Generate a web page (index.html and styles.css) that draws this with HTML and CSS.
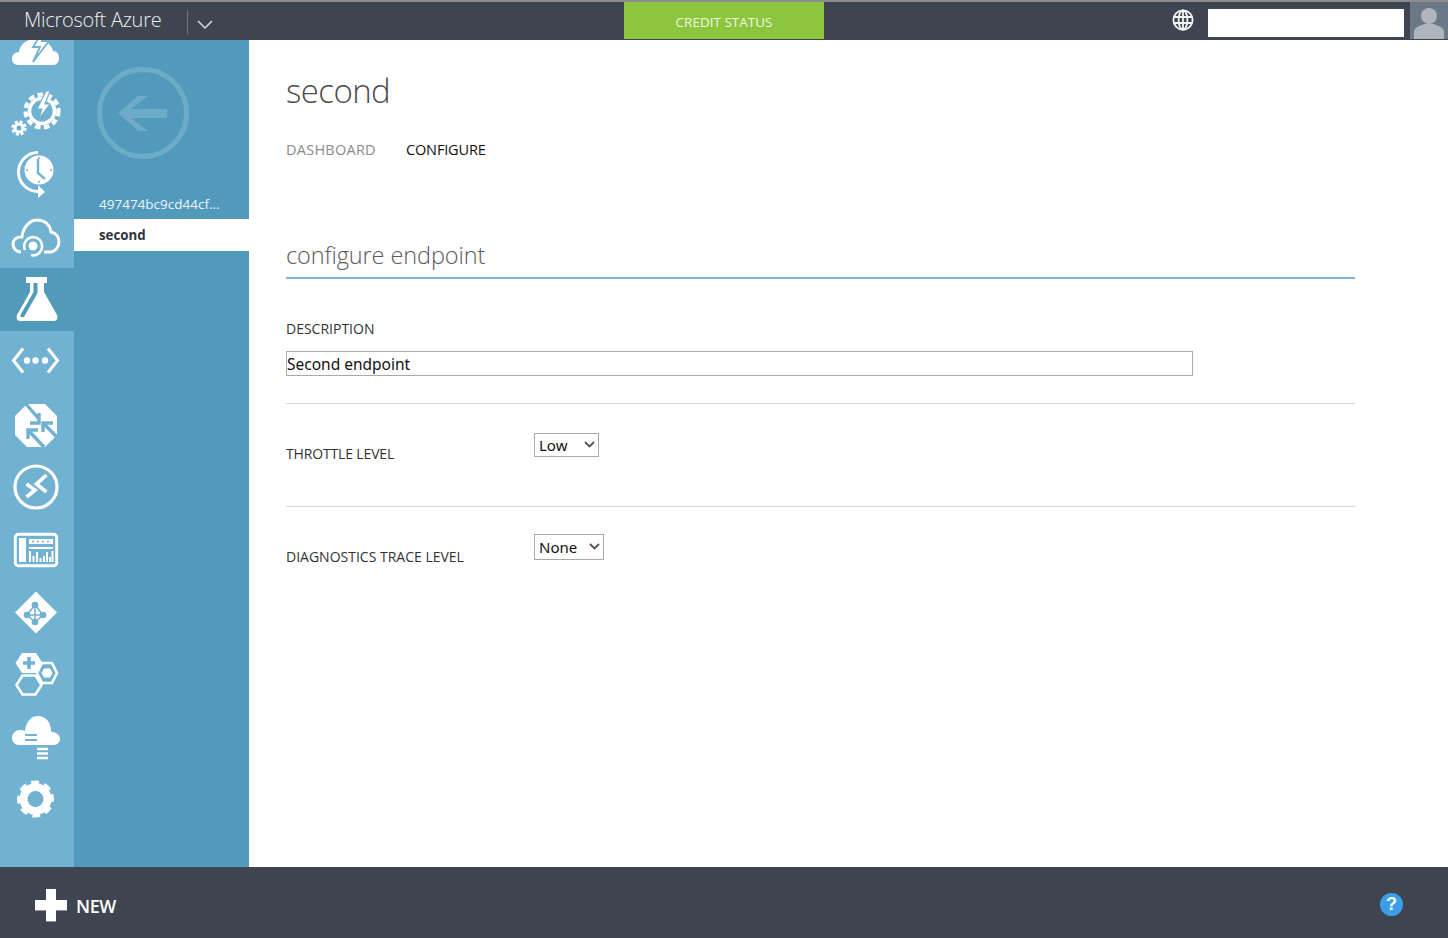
FILE: index.html
```html
<!DOCTYPE html>
<html lang="en">
<head>
<meta charset="utf-8">
<title>Microsoft Azure</title>
<link rel="stylesheet" href="styles.css">
</head>
<body>
<div class="app">
  <header class="topbar">
    <div class="brand">Microsoft Azure</div>
    <div class="brand-menu">
      <svg width="18" height="12" viewBox="0 0 18 12"><path d="M2 3l7 7 7-7" fill="none" stroke="#d8dade" stroke-width="1.5"/></svg>
    </div>
    <div class="credit-wrap"><a class="credit">CREDIT STATUS</a></div>
    <div class="top-right">
      <svg class="globe" width="22" height="22" viewBox="0 0 22 22" fill="none" stroke="#f2f3f4" stroke-width="1.8"><circle cx="11" cy="11" r="9.6"/><ellipse cx="11" cy="11" rx="4.4" ry="9.6"/><path d="M11 2v18M2 8h18M2 14h18"/></svg>
      <input class="search" type="text" aria-label="Search">
      <div class="avatar">
        <svg width="38" height="37" viewBox="0 0 38 37"><circle cx="19" cy="14" r="8" fill="#aeb5bc"/><path d="M4 37v-7c0-5 6-6 10-8h10c4 2 10 3 10 8v7z" fill="#aeb5bc"/></svg>
      </div>
    </div>
  </header>

  <div class="main">
    <nav class="rail">
      <ul class="rail-list">
        <li class="rail-item"><svg viewBox="0 0 74 63"><path d="M18 49c-4 0-6-3-6-6 0-4 3-7 7-7 1-8 8-13 17-13s15 5 17 12c4 0 6 3 6 7 0 4-2 7-6 7z" fill="#fff"/><path d="M46 10L33 31h7l-7 15 16-21h-7l6-15z" fill="#fff" stroke="#71b1d1" stroke-width="1.800"/></svg></li>
        <li class="rail-item"><svg viewBox="0 0 74 63"><g fill="none" stroke="#fff"><circle cx="42" cy="32" r="12.500" stroke-width="3.600"/><circle cx="42" cy="32" r="16.500" stroke-width="4.200" stroke-dasharray="5.500 3.600"/><circle cx="19" cy="49" r="4" stroke-width="3"/><circle cx="19" cy="49" r="6.400" stroke-width="2.600" stroke-dasharray="3 2"/></g><path d="M46 12l-9 18h5l-4 11 12-16h-5l5-13z" fill="#fff" stroke="#71b1d1" stroke-width="1.200"/></svg></li>
        <li class="rail-item"><svg viewBox="0 0 74 63"><circle cx="39" cy="28" r="14.500" fill="#fff"/><path d="M38 17v14l7 6" fill="none" stroke="#71b1d1" stroke-width="2.400"/><path d="M39 16h0M39 40v0M27 28h0M51 28h0" stroke="#71b1d1" stroke-width="2" stroke-linecap="round"/><path d="M38 10.500a19.500 19.500 0 0 0 0 39" fill="none" stroke="#fff" stroke-width="3"/><path d="M38 43l7 7-7 6z" fill="#fff"/></svg></li>
        <li class="rail-item"><svg viewBox="0 0 74 63"><path d="M21 47c-5 0-8-4-8-8s3-7 8-7h1c1-10 8-17 15-17 8 0 13 5 14 12 5 1 8 5 8 10s-4 10-9 10H44" fill="none" stroke="#fff" stroke-width="3"/><circle cx="33" cy="41" r="4.500" fill="#fff"/><path d="M25 45a9 9 0 1 1 15 2c-2 3-6 4-9 3" fill="none" stroke="#fff" stroke-width="2.600"/></svg></li>
        <li class="rail-item is-active"><svg viewBox="0 0 74 63"><path d="M26 9h21v6h-3v9l13 23c1 3 0 6-3 6H20c-3 0-4-3-3-6l13-23v-9h-4z" fill="#fff"/><path d="M33.500 15h4v10L24 49h-3c-1-1-.500-2 0-3l12.500-22z" fill="#519aba"/></svg></li>
        <li class="rail-item"><svg viewBox="0 0 74 63"><path d="M23 17.500L13.500 29.500 23 41.500M48 17.500L57.500 29.500 48 41.500" fill="none" stroke="#fff" stroke-width="3"/><circle cx="27" cy="29.500" r="3.200" fill="#fff"/><circle cx="35.500" cy="29.500" r="3.200" fill="#fff"/><circle cx="45" cy="29.500" r="3.200" fill="#fff"/></svg></li>
        <li class="rail-item"><svg viewBox="0 0 74 63"><path d="M27 10h18l12 12v19L45 53H27L15 41V22z" fill="#fff"/><g fill="none" stroke="#71b1d1" stroke-width="3.400"><path d="M26 10l13 15M39 19v10H30"/><path d="M43 29l14 14M43 38v-9h10"/><path d="M28 36l16 17M28 45v-9h10"/></g></svg></li>
        <li class="rail-item"><svg viewBox="0 0 74 63"><circle cx="36" cy="30" r="21" fill="none" stroke="#fff" stroke-width="3.200"/><path d="M26.500 27l8.500 6-8.500 7M46.500 18l-10 9 10 8" fill="none" stroke="#fff" stroke-width="3.600"/></svg></li>
        <li class="rail-item"><svg viewBox="0 0 74 63"><rect x="15.300" y="14.300" width="41.400" height="31.400" rx="3" fill="none" stroke="#fff" stroke-width="2.900"/><path d="M19 18h7v24h-7z" fill="#fff"/><path d="M29 19h24v5H29z" fill="#fff"/><path d="M29 28h24M30 42V31M33.500 42v-6M37 42v-10M40.500 42v-4M44 42v-6M47 42v-10M50 42v-5M52.500 42V31" fill="none" stroke="#fff" stroke-width="2"/><path d="M32 21.500h2M37 21.500h2M42 21.500h2M47 21.500h2" stroke="#71b1d1" stroke-width="1.600"/></svg></li>
        <li class="rail-item"><svg viewBox="0 0 74 63"><path d="M36 8.500l21 21-21 21-21-21z" fill="#fff"/><g fill="none" stroke="#71b1d1" stroke-width="1.500"><path d="M35 22l-8 10 8 7zM35 22l8 10-8 7M27 32h16"/></g><circle cx="35" cy="22" r="3.300" fill="#71b1d1"/><circle cx="27" cy="32" r="3.300" fill="#71b1d1"/><circle cx="43" cy="32" r="3.300" fill="#71b1d1"/><circle cx="35" cy="39" r="3.300" fill="#71b1d1"/></svg></li>
        <li class="rail-item"><svg viewBox="0 0 74 63"><path d="M22 7h14l6.500 10-6.500 10H22l-6.500-10z" fill="#fff"/><path d="M29 11v12M23 17h12" stroke="#71b1d1" stroke-width="3.600"/><path d="M42 17h10l5 10-5 10H42l-5-10zM22.500 29.500h13l6 9.500-6 9.500h-13l-6-9.500z" fill="none" stroke="#fff" stroke-width="2.600"/><path d="M44 22.500h6l2.500 4.500-2.500 4.500h-6l-2.500-4.500z" fill="#fff"/></svg></li>
        <li class="rail-item"><svg viewBox="0 0 74 63"><path d="M19 36c-4 0-7-3-7-7 0-4 3-8 8-8 1 0 3 0 5 1 1-9 6-15 13-15 7 0 12 5 13 13 0 2 0 3 1 3 4 0 8 3 8 7 0 3-3 6-6 6z" fill="#fff"/><path d="M25 26h12M25 31h12" stroke="#71b1d1" stroke-width="2.200"/><path d="M37 40h11M37 44.500h11M37 49h11" stroke="#fff" stroke-width="2.600"/></svg></li>
        <li class="rail-item"><svg viewBox="0 0 74 63"><g fill="none" stroke="#fff" transform="rotate(-16.400 35.500 27)"><circle cx="35.500" cy="27" r="12" stroke-width="8"/><circle cx="35.500" cy="27" r="16.500" stroke-width="4" stroke-dasharray="7.500 5.460"/></g></svg></li>
      </ul>
    </nav>

    <aside class="panel">
      <svg class="back" width="96" height="96" viewBox="0 0 96 96"><circle cx="48" cy="48" r="43.500" fill="none" stroke="#6dabc8" stroke-width="5"/><path d="M23 48l20-17h10L36 44h36v9H36l17 13H43z" fill="#6dabc8"/></svg>
      <div class="panel-parent">497474bc9cd44cf...</div>
      <div class="panel-current">second</div>
    </aside>

    <main class="content">
      <h1 class="title">second</h1>
      <div class="tabs">
        <a class="tab">DASHBOARD</a>
        <a class="tab tab-on">CONFIGURE</a>
      </div>
      <h2 class="section">configure endpoint</h2>
      <form class="form">
        <div class="field-desc">
          <label class="label label-desc">DESCRIPTION</label>
          <input class="text" type="text" value="Second endpoint">
        </div>
        <div class="field-row field-throttle">
          <label class="label">THROTTLE LEVEL</label>
          <div class="pick-wrap">
            <select class="pick pick-low"><option>Low</option></select>
            <svg class="pick-arrow" width="11" height="7" viewBox="0 0 11 7"><path d="M1 1l4.500 4.500L10 1" fill="none" stroke="#555" stroke-width="1.800"/></svg>
          </div>
        </div>
        <div class="field-row field-trace">
          <label class="label">DIAGNOSTICS TRACE LEVEL</label>
          <div class="pick-wrap">
            <select class="pick pick-none"><option>None</option></select>
            <svg class="pick-arrow" width="11" height="7" viewBox="0 0 11 7"><path d="M1 1l4.500 4.500L10 1" fill="none" stroke="#555" stroke-width="1.800"/></svg>
          </div>
        </div>
      </form>
    </main>
  </div>

  <footer class="bottombar">
    <a class="new">
      <svg width="32" height="33" viewBox="0 0 32 33"><path d="M11 1h10v11h11v10H21v11H11V22H0V12h11z" fill="#8f939a"/><path d="M11 0h10v11h11v10H21v11H11V21H0V11h11z" fill="#fff"/></svg>
      <span>NEW</span>
    </a>
    <a class="help">?</a>
  </footer>
</div>
</body>
</html>
```
FILE: styles.css
```css
* { box-sizing: border-box; }
html, body { margin: 0; height: 100%; overflow: hidden; }
body { font-family: "Open Sans", "Noto Sans", sans-serif; background: #fff; }
ul { list-style: none; margin: 0; padding: 0; }
.app { width: 1448px; height: 938px; display: flex; flex-direction: column; }

.topbar { height: 40px; flex: none; display: flex; align-items: stretch; background: #3e4551; border-top: 2px solid #8c8c8c; }
.brand { width: 187px; padding-left: 24px; color: #eceef0; font-size: 20px; font-weight: 300; line-height: 36px; letter-spacing: -.28px; white-space: nowrap; }
.brand-menu { width: 437px; margin: 8px 0 6px; border-left: 1px solid #6f7580; padding: 8px 0 0 8px; display: flex; align-items: flex-start; }
.credit-wrap { width: 200px; }
.credit { display: block; height: 37px; background: #8cc63f; color: #eef6e3; font-size: 13.500px; line-height: 40px; text-align: center; }
.top-right { flex: 1; display: flex; align-items: flex-start; }
.globe { margin: 7px 0 0 348px; flex: none; }
.search { width: 196px; height: 28px; margin: 7px 0 0 14px; border: 0; background: #fff; flex: none; padding: 0; }
.avatar { width: 38px; height: 37px; margin-left: 6px; background: #6b7888; flex: none; }
.avatar svg { display: block; }

.main { flex: 1; display: flex; min-height: 0; }
.rail { width: 74px; flex: none; background: #71b1d1; overflow: hidden; }
.rail-list { margin-top: -24px; }
.rail-item { height: 63px; }
.rail-item svg { display: block; width: 74px; height: 63px; }
.rail-item.is-active { background: #519aba; }

.panel { width: 175px; flex: none; background: #519abc; padding-top: 25px; }
.back { display: block; margin-left: 21px; }
.panel-parent { margin-top: 32px; padding-left: 25px; color: #eef5f9; font-size: 13.500px; line-height: 22px; white-space: nowrap; }
.panel-current { margin-top: 4px; height: 32px; padding-left: 25px; background: #fff; color: #2f3540; font-size: 13.300px; font-weight: 700; line-height: 33px; }

.content { flex: 1; padding: 0 93px 0 37px; min-width: 0; color: #333; }
.title { margin: 23px 0 0; color: #4d4d4d; font-size: 33px; font-weight: 300; line-height: 56px; letter-spacing: -.6px; }
.tabs { display: flex; margin-top: 21px; font-size: 14.500px; line-height: 20px; }
.tab { color: #8a8a8a; width: 120px; letter-spacing: .25px; }
.tab-on { color: #111; letter-spacing: -.15px; }
.section { margin: 80px 0 0; height: 39px; border-bottom: 2px solid #7fb2d9; color: #5a5a5a; font-size: 23.500px; font-weight: 300; line-height: 30px; letter-spacing: -.1px; }
.form { display: block; }
.label { color: #333; font-size: 14px; line-height: 20px; }
.label-desc { display: block; }
.field-desc { height: 125px; padding-top: 40px; border-bottom: 1px solid #d9d9d9; }
.text { display: block; margin-top: 12px; width: 907px; height: 25px; border: 1px solid #a9a9a9; border-radius: 0; padding: 0; font-family: "Noto Sans", sans-serif; font-size: 15.500px; color: #111; background: #fff; }
.field-row { display: flex; align-items: flex-start; }
.field-row .label { width: 248px; flex: none; }
.field-throttle { height: 103px; border-bottom: 1px solid #d9d9d9; padding-top: 29px; }
.field-throttle .label { margin-top: 11px; letter-spacing: -.15px; }
.field-trace { padding-top: 27px; }
.field-trace .label { margin-top: 13px; }
.pick-wrap { position: relative; display: flex; }
.pick { appearance: none; border: 1px solid #a9a9a9; border-radius: 0; background: #fff; padding: 0 0 0 4px; font-family: "Noto Sans", sans-serif; font-size: 15px; color: #111; }
.pick-low { width: 65px; height: 24px; }
.pick-none { width: 70px; height: 26px; }
.pick-arrow { position: absolute; right: 4px; top: 50%; margin-top: -4px; pointer-events: none; }

.bottombar { height: 71px; flex: none; background: #3e4551; display: flex; align-items: flex-start; justify-content: space-between; padding: 22px 45px 0 35px; }
.new { display: flex; align-items: center; gap: 9px; color: #fff; font-size: 18px; font-weight: 600; letter-spacing: -.4px; }
.help { width: 23px; height: 23px; margin-top: 4px; border-radius: 50%; background: #3a9fe8; color: #fff; font-family: "Liberation Sans", sans-serif; font-size: 18px; font-weight: 700; line-height: 23px; text-align: center; }
```
